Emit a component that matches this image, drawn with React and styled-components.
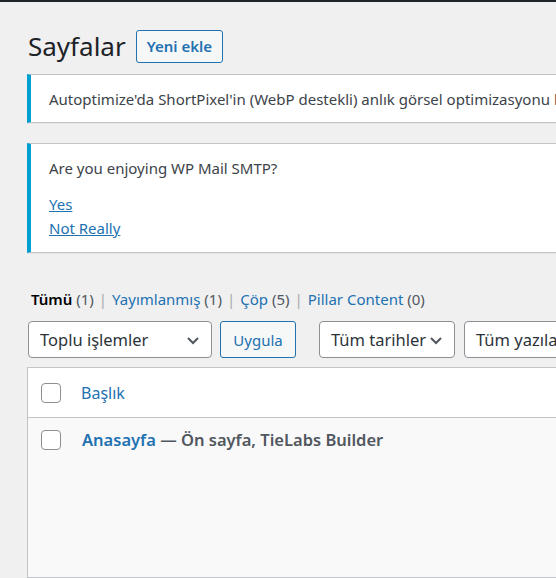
import React from 'react';
import styled, { createGlobalStyle } from 'styled-components';

const GlobalStyle = createGlobalStyle`
  html, body {
    margin: 0;
    padding: 0;
    background: #f0f0f1;
    overflow: hidden;
  }
  body {
    font-family: 'Noto Sans', 'DejaVu Sans', sans-serif;
    color: #3c434a;
  }
`;

const AdminBar = styled.div`
  height: 2px;
  background: #1d2327;
`;

const Wrap = styled.div`
  width: 900px;
  padding-left: 27px;
`;

const Header = styled.div`
  display: flex;
  align-items: center;
  gap: 10px;
  height: 32px;
  margin-top: 28px;
  padding-left: 1px;
`;

const Title = styled.h1`
  margin: 0;
  font-size: 26px;
  font-weight: 400;
  color: #1d2327;
  line-height: 32px;
`;

const AddButton = styled.a`
  display: inline-flex;
  align-items: center;
  height: 31px;
  padding: 0 10px;
  border: 1px solid #2271b1;
  border-radius: 3px;
  background: #f6f7f7;
  color: #2271b1;
  font-size: 15px;
  font-weight: 600;
  text-decoration: none;
`;

const Notice = styled.div`
  background: #fff;
  border: 1px solid #c3c4c7;
  border-left: 4px solid #00a0d2;
  border-right: none;
  box-shadow: 0 1px 1px rgba(0, 0, 0, 0.04);
  padding: ${p => p.$pad || '13px 18px 12px'};
  margin-top: ${p => p.$top || 0}px;
  font-size: 15px;
  line-height: 22px;
  overflow: hidden;
`;

const NoticeText = styled.p`
  margin: 0;
  white-space: nowrap;
`;

const NoticeLink = styled.a`
  display: block;
  color: #2271b1;
  font-size: 15px;
  line-height: 24px;
  text-decoration: underline;
  width: max-content;
`;

const Links = styled.div`
  margin-top: 13px;
`;

const Subsub = styled.ul`
  display: flex;
  list-style: none;
  margin: 35px 0 0;
  padding: 0 0 0 4px;
  font-size: 15px;
  line-height: 22px;
  color: #50575e;
`;

const SubItem = styled.li`
  white-space: pre;
`;

const SubLink = styled.a`
  color: ${p => (p.$current ? '#000' : '#2271b1')};
  font-weight: ${p => (p.$current ? 600 : 400)};
  text-decoration: none;
`;

const Count = styled.span`
  color: #50575e;
`;

const Sep = styled.span`
  color: #a7aaad;
  margin: 0 5px;
`;

const Toolbar = styled.div`
  display: flex;
  align-items: center;
  margin-top: 11px;
  padding-left: 1px;
`;

const Select = styled.div`
  display: flex;
  align-items: center;
  justify-content: space-between;
  box-sizing: border-box;
  width: ${p => p.$w}px;
  height: 37px;
  margin-left: ${p => p.$ml || 0}px;
  padding: 0 10px 0 11px;
  background: #fff;
  border: 1px solid #8c8f94;
  border-radius: 4px;
  font-size: 16.5px;
  color: #2c3338;
  white-space: nowrap;
  overflow: hidden;
`;

const Chevron = () => (
  <svg width="16" height="16" viewBox="0 0 16 16">
    <path d="M3 6l5 5 5-5" fill="none" stroke="#50575e" strokeWidth="2" />
  </svg>
);

const ApplyButton = styled.button`
  box-sizing: border-box;
  height: 37px;
  width: 76px;
  margin-left: 8px;
  background: #f6f7f7;
  border: 1px solid #2271b1;
  border-radius: 3px;
  color: #2271b1;
  font-family: inherit;
  font-size: 15px;
`;

const Table = styled.div`
  margin-top: 9px;
  height: 209px;
  border: 1px solid #c3c4c7;
  border-right: none;
  background: #f9f9f9;
`;

const HeadRow = styled.div`
  display: flex;
  align-items: center;
  height: 49px;
  background: #fff;
  border-bottom: 1px solid #c3c4c7;
`;

const Row = styled.div`
  display: flex;
  align-items: flex-start;
  padding-top: 12px;
`;

const CheckCell = styled.div`
  width: 53px;
  display: flex;
  padding-left: 13px;
  box-sizing: border-box;
`;

const Checkbox = styled.span`
  display: block;
  box-sizing: border-box;
  width: 20px;
  height: 20px;
  border: 1px solid #8c8f94;
  border-radius: 4px;
  background: #fff;
`;

const HeadLink = styled.a`
  color: #2271b1;
  font-size: 16px;
  text-decoration: none;
`;

const RowTitle = styled.strong`
  font-size: 16.5px;
  font-weight: 600;
  color: #50575e;
  line-height: 20px;
  padding-left: 1px;
`;

const RowLink = styled.a`
  color: #2271b1;
  text-decoration: none;
`;

export default function App() {
  return (
    <>
      <GlobalStyle />
      <AdminBar />
      <Wrap>
        <Header>
          <Title>Sayfalar</Title>
          <AddButton href="#">Yeni ekle</AddButton>
        </Header>

        <Notice $top={12}>
          <NoticeText>
            Autoptimize'da ShortPixel'in (WebP destekli) anlık görsel optimizasyonu hakkında bilgi edinin!
          </NoticeText>
        </Notice>

        <Notice $top={20} $pad="13px 18px 12px">
          <NoticeText>Are you enjoying WP Mail SMTP?</NoticeText>
          <Links>
            <NoticeLink href="#">Yes</NoticeLink>
            <NoticeLink href="#">Not Really</NoticeLink>
          </Links>
        </Notice>

        <Subsub>
          <SubItem>
            <SubLink $current>Tümü</SubLink> <Count>(1)</Count>
            <Sep>|</Sep>
          </SubItem>
          <SubItem>
            <SubLink href="#">Yayımlanmış</SubLink> <Count>(1)</Count>
            <Sep>|</Sep>
          </SubItem>
          <SubItem>
            <SubLink href="#">Çöp</SubLink> <Count>(5)</Count>
            <Sep>|</Sep>
          </SubItem>
          <SubItem>
            <SubLink href="#">Pillar Content</SubLink> <Count>(0)</Count>
          </SubItem>
        </Subsub>

        <Toolbar>
          <Select $w={184}>
            Toplu işlemler <Chevron />
          </Select>
          <ApplyButton>Uygula</ApplyButton>
          <Select $w={136} $ml={23}>
            Tüm tarihler <Chevron />
          </Select>
          <Select $w={200} $ml={9}>
            Tüm yazılar <Chevron />
          </Select>
        </Toolbar>

        <Table>
          <HeadRow>
            <CheckCell>
              <Checkbox />
            </CheckCell>
            <HeadLink href="#">Başlık</HeadLink>
          </HeadRow>
          <Row>
            <CheckCell>
              <Checkbox />
            </CheckCell>
            <RowTitle>
              <RowLink href="#">Anasayfa</RowLink> — Ön sayfa, TieLabs Builder
            </RowTitle>
          </Row>
        </Table>
      </Wrap>
    </>
  );
}
